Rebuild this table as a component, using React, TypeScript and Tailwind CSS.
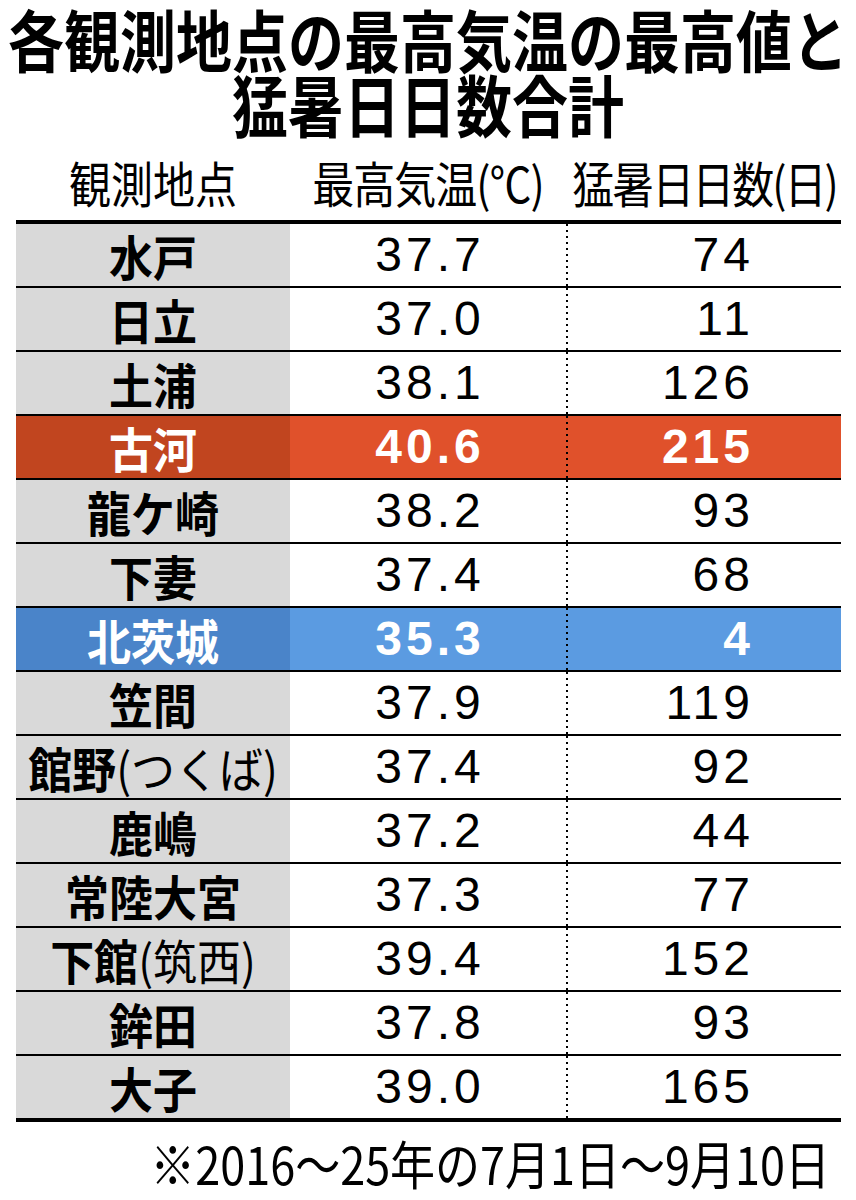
import React from "react";

type Row = { name: string; note?: string; temp: string; days: string; hl?: "hot" | "cool" };

const rows: Row[] = [
  { name: "水戸", temp: "37.7", days: "74" },
  { name: "日立", temp: "37.0", days: "11" },
  { name: "土浦", temp: "38.1", days: "126" },
  { name: "古河", temp: "40.6", days: "215", hl: "hot" },
  { name: "龍ケ崎", temp: "38.2", days: "93" },
  { name: "下妻", temp: "37.4", days: "68" },
  { name: "北茨城", temp: "35.3", days: "4", hl: "cool" },
  { name: "笠間", temp: "37.9", days: "119" },
  { name: "館野", note: "(つくば)", temp: "37.4", days: "92" },
  { name: "鹿嶋", temp: "37.2", days: "44" },
  { name: "常陸大宮", temp: "37.3", days: "77" },
  { name: "下館", note: "(筑西)", temp: "39.4", days: "152" },
  { name: "鉾田", temp: "37.8", days: "93" },
  { name: "大子", temp: "39.0", days: "165" },
];

const jp = "font-['Noto_Sans_CJK_JP',sans-serif]";
const num = "font-['Liberation_Sans',Arial,sans-serif]";

function TableRow({ r }: { r: Row }) {
  const rowBg = r.hl === "hot" ? "bg-[#e0512b]" : r.hl === "cool" ? "bg-[#5b9be1]" : "bg-white";
  const nameBg = r.hl === "hot" ? "bg-[#c1451f]" : r.hl === "cool" ? "bg-[#4a84c9]" : "bg-[#d9d9d9]";
  const color = r.hl ? "text-white font-bold" : "text-black";
  return (
    <div className={`flex h-[64px] border-b-2 border-black last:h-[62px] last:border-b-0 ${rowBg}`}>
      <div className={`flex w-[274px] items-center justify-center ${nameBg} ${jp} text-[44px] leading-none ${r.hl ? "text-white" : "text-black"}`}>
        <span className="inline-block scale-y-[1.08] whitespace-nowrap">
          <span className="font-bold">{r.name}</span>
          {r.note && <span className="font-normal">{r.note}</span>}
        </span>
      </div>
      <div className={`flex w-[276px] items-center justify-center pl-[4px] ${num} text-[48px] tracking-[4px] ${color}`}>
        {r.temp}
      </div>
      <div className="w-[2px] bg-[linear-gradient(#000_0_2px,transparent_2px)] bg-[length:2px_6px]" />
      <div className={`flex flex-1 items-center justify-end pr-[87px] ${num} text-[48px] tracking-[4px] ${color}`}>
        {r.days}
      </div>
    </div>
  );
}

export default function App() {
  return (
    <div className={`w-[856px] h-[1200px] bg-white text-black ${jp}`}>
      <div className="pt-[5px] text-center text-[56px] font-bold leading-[65px]">
        <div>
          <span className="inline-block scale-y-[1.2] whitespace-nowrap">各観測地点の最高気温の最高値と</span>
        </div>
        <div>
          <span className="inline-block scale-y-[1.2] whitespace-nowrap">猛暑日日数合計</span>
        </div>
      </div>

      <div className="ml-[16px] mt-[22px] flex w-[825px] whitespace-nowrap text-[42px] leading-[50px]">
        <div className="w-[274px] text-center">
          <span className="inline-block scale-y-[1.15]">観測地点</span>
        </div>
        <div className="w-[276px] text-center">
          <span className="inline-block scale-y-[1.15] tracking-[-1px]">最高気温(℃)</span>
        </div>
        <div className="flex-1 text-center pl-[2px]">
          <span className="inline-block scale-y-[1.15] tracking-[-2px]">猛暑日日数(日)</span>
        </div>
      </div>

      <div className="ml-[16px] mt-[13px] w-[825px] border-y-4 border-black">
        {rows.map((r) => (
          <TableRow key={r.name} r={r} />
        ))}
      </div>

      <div className="mt-[16px] pr-[26px] text-right text-[45px] leading-[50px] whitespace-nowrap">
        <span className="inline-block origin-right scale-y-[1.15]">※2016～25年の7月1日～9月10日</span>
      </div>
    </div>
  );
}
